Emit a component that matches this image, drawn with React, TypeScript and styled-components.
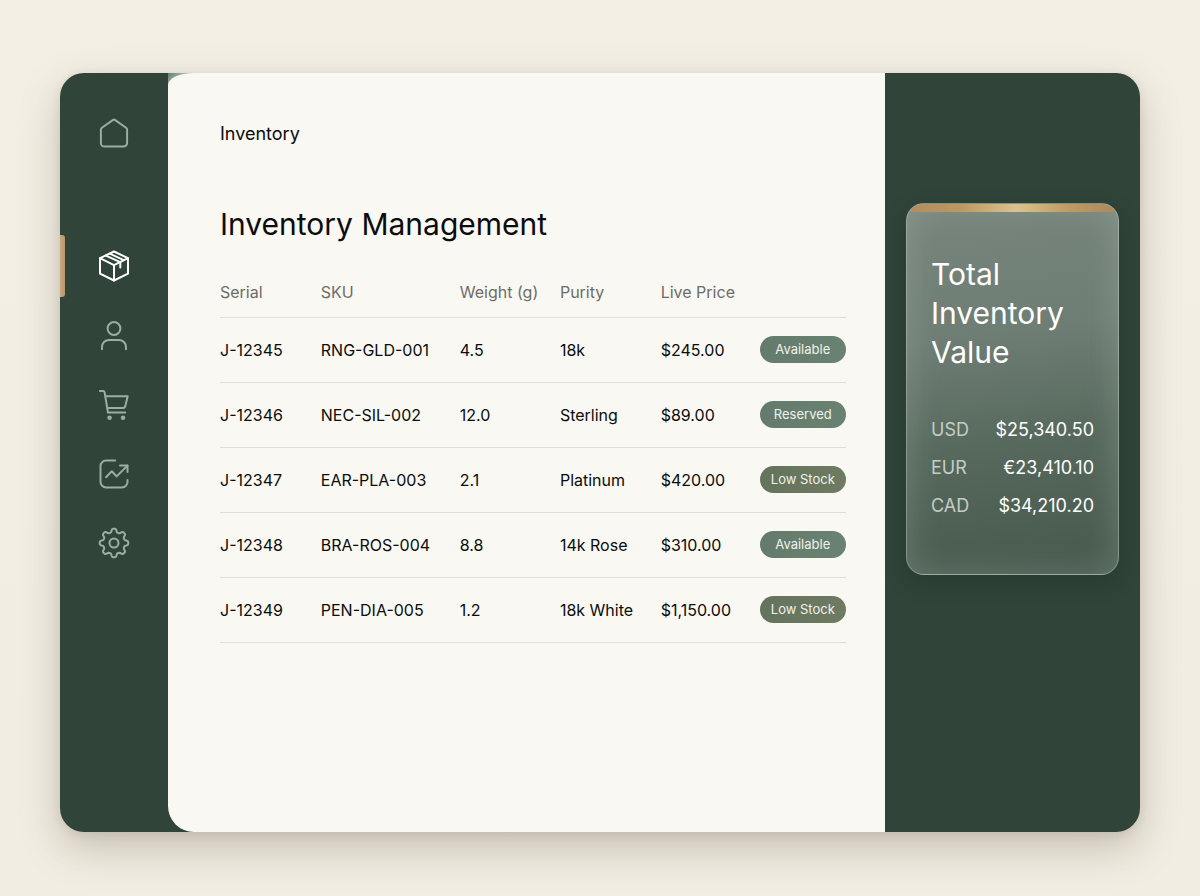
import React from 'react';
import styled, { createGlobalStyle } from 'styled-components';

const GlobalStyle = createGlobalStyle`
  *, *::before, *::after { box-sizing: border-box; }
  body {
    margin: 0;
    background: #f3eee3;
    color: #0b0c0b;
    font-family: Inter, "Liberation Sans", sans-serif;
  }
`;

const Page = styled.div`
  min-height: 100vh;
  padding: 73px 60px 64px;
  display: flex;
  background: linear-gradient(#f4efe4, #f2ede2);
`;

const Frame = styled.div`
  flex: 1;
  display: grid;
  grid-template-columns: 108px minmax(0, 1fr) 255px;
  border-radius: 24px;
  overflow: hidden;
  background: #304439;
  box-shadow: 0 16px 40px rgba(70, 60, 45, 0.26), 0 2px 10px rgba(70, 60, 45, 0.1);
`;

const Sidebar = styled.nav`
  padding-top: 31px;
`;

const NavList = styled.ul`
  list-style: none;
  margin: 0;
  padding: 0;
  display: flex;
  flex-direction: column;
  gap: 9px;
`;

const NavItem = styled.li<{ $spaced?: boolean }>`
  margin-bottom: ${(p) => (p.$spaced ? '62px' : '0')};
`;

const NavLink = styled.a<{ $active?: boolean }>`
  position: relative;
  display: flex;
  align-items: center;
  justify-content: center;
  height: ${(p) => (p.$active ? '62px' : '60px')};
  color: ${(p) => (p.$active ? '#ffffff' : '#9dada1')};

  &::before {
    content: '';
    display: ${(p) => (p.$active ? 'block' : 'none')};
    position: absolute;
    inset: 0 auto 0 0;
    width: 5px;
    border-radius: 0 3px 3px 0;
    background: linear-gradient(90deg, #c9a77a, #b8976c);
  }
`;

const Icon = styled.svg`
  width: 32px;
  height: 32px;
  fill: none;
  stroke: currentColor;
  stroke-width: 2;
  stroke-linecap: round;
  stroke-linejoin: round;
`;

const MainBack = styled.div`
  display: flex;
  background: linear-gradient(135deg, #5f7c6e 0, #a9b8ae 12px, #304439 40px);
`;

const Main = styled.main`
  flex: 1;
  min-width: 0;
  padding: 49px 39px 48px 52px;
  border-radius: 26px 0 0 26px / 12px 0 0 26px;
  background: #f9f8f3;
`;

const Crumb = styled.p`
  margin: 0;
  font-size: 18px;
  line-height: 24px;
`;

const Title = styled.h1`
  margin: 58px 0 0;
  font-size: 30px;
  line-height: 40px;
  font-weight: 400;
`;

const Table = styled.table`
  width: 100%;
  margin-top: 23px;
  table-layout: fixed;
  border-collapse: collapse;
  text-align: left;
`;

const Column = styled.col<{ $share: number }>`
  width: ${(p) => p.$share}%;
`;

const HeadCell = styled.th`
  height: 50px;
  padding: 0;
  border-bottom: 1px solid #dededa;
  color: #6c6d69;
  font-size: 16px;
  font-weight: 400;
  white-space: nowrap;
`;

const Cell = styled.td`
  height: 65px;
  padding: 0;
  border-bottom: 1px solid #dededa;
  font-size: 16px;
  white-space: nowrap;
`;

type Tone = 'sage' | 'olive';

const Badge = styled.span<{ $tone: Tone }>`
  display: block;
  border-radius: 14px;
  background: ${(p) =>
    p.$tone === 'olive'
      ? 'linear-gradient(100deg, #64735d, #6f7b62)'
      : 'linear-gradient(100deg, #647b6b, #6a8272)'};
  color: #eff2ec;
  font-size: 13px;
  line-height: 27px;
  text-align: center;
`;

const Aside = styled.aside`
  padding: 130px 21px 40px;
`;

const Card = styled.section`
  position: relative;
  overflow: hidden;
  padding: 51px 24px 49px;
  border: 1px solid rgba(214, 226, 216, 0.42);
  border-radius: 18px;
  background: linear-gradient(172deg, #77857b 0%, #6f7e75 35%, #586a5e 62%, #46584c 100%);
  box-shadow: inset 0 0 34px rgba(205, 220, 210, 0.24), 0 8px 22px rgba(12, 26, 18, 0.22);
  color: #ffffff;

  &::before {
    content: '';
    position: absolute;
    inset: 0 0 auto;
    height: 8px;
    background: linear-gradient(90deg, #b08d5c, #bd9763 25%, #dbc38d 52%, #bd9862 78%, #aa895a);
  }
`;

const CardTitle = styled.h2`
  margin: 0;
  font-size: 30px;
  line-height: 39px;
  font-weight: 400;
`;

const Totals = styled.dl`
  margin: 39px 0 0;
`;

const TotalRow = styled.div`
  display: flex;
  justify-content: space-between;
  font-size: 18px;
  line-height: 38px;
`;

const Currency = styled.dt`
  color: #c4cdc6;
`;

const Amount = styled.dd`
  margin: 0;
`;

const HomeIcon = () => (
  <Icon viewBox="0 0 32 32" aria-hidden="true">
    <path d="M15.1 1.9 3.9 9.7c-.7.5-1 1.1-1 1.9v13.300a3.600 3.600 0 0 0 3.600 3.600h19a3.600 3.600 0 0 0 3.600-3.600V11.600c0-.8-.4-1.400-1-1.900L16.900 1.900a1.600 1.600 0 0 0-1.800 0Z" />
  </Icon>
);

const BoxIcon = () => (
  <Icon viewBox="0 0 32 32" aria-hidden="true">
    <path d="M16 1.500 30 8.200v15.500L16 30.500 2 23.700V8.200Z" />
    <path d="M2 8.200 16 15.200 30 8.200M16 15.200v15.300" />
    <path d="M7.800 5.600 22.300 12.200v5.200" />
    <path d="M11.800 3.700 25.800 10.200" />
  </Icon>
);

const UserIcon = () => (
  <Icon viewBox="0 0 32 32" aria-hidden="true">
    <circle cx="16" cy="8.500" r="6.400" />
    <path d="M4 29.300v-2.300a7 7 0 0 1 7-7h10a7 7 0 0 1 7 7v2.300" />
  </Icon>
);

const CartIcon = () => (
  <Icon viewBox="0 0 32 32" aria-hidden="true">
    <path d="M1.900 2h3.200c.8 0 1.300.5 1.500 1.300L10 23.600h17.200" />
    <path d="M7.500 7.200h22.200l-2.500 10.200c-.3 1-.9 1.500-1.900 1.500H9.300" />
    <circle cx="11.600" cy="28.700" r="1.300" fill="currentColor" />
    <circle cx="25" cy="28.700" r="1.300" fill="currentColor" />
  </Icon>
);

const TrendIcon = () => (
  <Icon viewBox="0 0 32 32" aria-hidden="true">
    <path d="M17.200 2.600H8a5.500 5.500 0 0 0-5.500 5.500v15.800A5.500 5.500 0 0 0 8 29.400h16a5.500 5.500 0 0 0 5.500-5.500v-2" />
    <path d="m8 19.200 5.800-5.900 4.800 5.100L29.500 7.600" />
    <path d="M22 7.600h7.500V14" />
  </Icon>
);

const gearPath = (() => {
  const points: string[] = [];
  for (let i = 0; i <= 160; i += 1) {
    const angle = (i / 160) * Math.PI * 2 - Math.PI / 2;
    const wave = Math.tanh(1.7 * Math.cos(8 * (angle + Math.PI / 2))) / Math.tanh(1.7);
    const radius = 12.6 + 1.7 * wave;
    points.push(`${(16 + radius * Math.cos(angle)).toFixed(2)} ${(16 + radius * Math.sin(angle)).toFixed(2)}`);
  }
  return `M${points.join('L')}Z`;
})();

const GearIcon = () => (
  <Icon viewBox="0 0 32 32" aria-hidden="true">
    <path d={gearPath} />
    <circle cx="16" cy="16" r="4.500" />
  </Icon>
);

const navItems = [
  { label: 'Home', icon: HomeIcon, spaced: true },
  { label: 'Inventory', icon: BoxIcon, active: true },
  { label: 'Customers', icon: UserIcon },
  { label: 'Orders', icon: CartIcon },
  { label: 'Reports', icon: TrendIcon },
  { label: 'Settings', icon: GearIcon },
];

const columnShares = [16.1, 22.2, 16, 16.1, 15.8, 13.8];

const items: { serial: string; sku: string; weight: string; purity: string; price: string; status: string; tone: Tone }[] = [
  { serial: 'J-12345', sku: 'RNG-GLD-001', weight: '4.5', purity: '18k', price: '$245.00', status: 'Available', tone: 'sage' },
  { serial: 'J-12346', sku: 'NEC-SIL-002', weight: '12.0', purity: 'Sterling', price: '$89.00', status: 'Reserved', tone: 'sage' },
  { serial: 'J-12347', sku: 'EAR-PLA-003', weight: '2.1', purity: 'Platinum', price: '$420.00', status: 'Low Stock', tone: 'olive' },
  { serial: 'J-12348', sku: 'BRA-ROS-004', weight: '8.8', purity: '14k Rose', price: '$310.00', status: 'Available', tone: 'sage' },
  { serial: 'J-12349', sku: 'PEN-DIA-005', weight: '1.2', purity: '18k White', price: '$1,150.00', status: 'Low Stock', tone: 'olive' },
];

const totals = [
  { currency: 'USD', amount: '$25,340.50' },
  { currency: 'EUR', amount: '€23,410.10' },
  { currency: 'CAD', amount: '$34,210.20' },
];

export default function App() {
  return (
    <>
      <GlobalStyle />
      <Page>
        <Frame>
          <Sidebar aria-label="Primary">
            <NavList>
              {navItems.map(({ label, icon: Glyph, active, spaced }) => (
                <NavItem key={label} $spaced={spaced}>
                  <NavLink href="#" aria-label={label} aria-current={active ? 'page' : undefined} $active={active}>
                    <Glyph />
                  </NavLink>
                </NavItem>
              ))}
            </NavList>
          </Sidebar>
          <MainBack>
            <Main>
              <Crumb>Inventory</Crumb>
              <Title>Inventory Management</Title>
              <Table>
                <colgroup>
                  {columnShares.map((share, i) => (
                    <Column key={i} $share={share} />
                  ))}
                </colgroup>
                <thead>
                  <tr>
                    <HeadCell scope="col">Serial</HeadCell>
                    <HeadCell scope="col">SKU</HeadCell>
                    <HeadCell scope="col">Weight (g)</HeadCell>
                    <HeadCell scope="col">Purity</HeadCell>
                    <HeadCell scope="col">Live Price</HeadCell>
                    <HeadCell scope="col" aria-label="Status" />
                  </tr>
                </thead>
                <tbody>
                  {items.map((item) => (
                    <tr key={item.serial}>
                      <Cell>{item.serial}</Cell>
                      <Cell>{item.sku}</Cell>
                      <Cell>{item.weight}</Cell>
                      <Cell>{item.purity}</Cell>
                      <Cell>{item.price}</Cell>
                      <Cell>
                        <Badge $tone={item.tone}>{item.status}</Badge>
                      </Cell>
                    </tr>
                  ))}
                </tbody>
              </Table>
            </Main>
          </MainBack>
          <Aside>
            <Card>
              <CardTitle>Total Inventory Value</CardTitle>
              <Totals>
                {totals.map((total) => (
                  <TotalRow key={total.currency}>
                    <Currency>{total.currency}</Currency>
                    <Amount>{total.amount}</Amount>
                  </TotalRow>
                ))}
              </Totals>
            </Card>
          </Aside>
        </Frame>
      </Page>
    </>
  );
}
